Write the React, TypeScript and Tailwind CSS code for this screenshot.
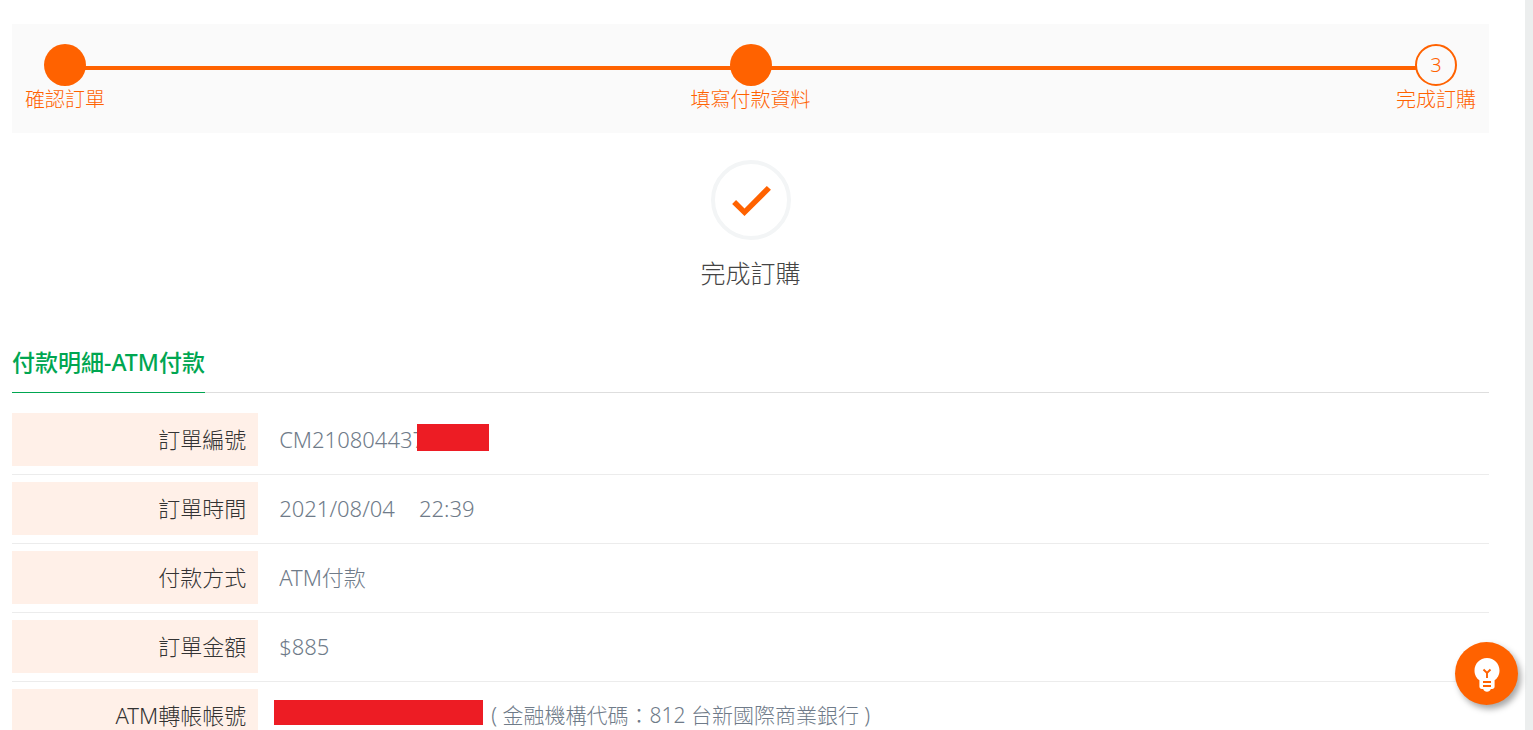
import type { ReactNode } from "react";

type Step = { label: string; number: number; done: boolean };
type Detail = { label: string; value: ReactNode };

const steps: Step[] = [
  { label: "確認訂單", number: 1, done: true },
  { label: "填寫付款資料", number: 2, done: true },
  { label: "完成訂購", number: 3, done: false },
];

const details: Detail[] = [
  {
    label: "訂單編號",
    value: (
      <span className="relative">
        CM210804437
        <span className="absolute top-0 left-[138px] h-[27px] w-[72px] bg-[#ed1c24]" />
      </span>
    ),
  },
  {
    label: "訂單時間",
    value: (
      <span className="flex gap-6">
        <span>2021/08/04</span>
        <span>22:39</span>
      </span>
    ),
  },
  { label: "付款方式", value: "ATM付款" },
  { label: "訂單金額", value: "$885" },
  {
    label: "ATM轉帳帳號",
    value: (
      <span className="-ml-[5px] flex items-center gap-2 text-[21px]">
        <span className="mb-1.5 h-[25px] w-[209px] bg-[#ed1c24]" />
        <span>( 金融機構代碼：812 台新國際商業銀行 )</span>
      </span>
    ),
  },
];

function Steps() {
  return (
    <div className="relative bg-[#fafafa] px-[13px] pt-5 pb-[19px]">
      <div className="absolute inset-x-16 top-[42px] h-1 bg-[#ff6200]" />
      <ol className="relative flex justify-between text-xl text-[#ff6200]">
        {steps.map((s) => (
          <li key={s.number} className="flex flex-col items-center">
            <span
              className={
                s.done
                  ? "h-[42px] w-[42px] rounded-full bg-[#ff6200]"
                  : "flex h-[42px] w-[42px] items-center justify-center rounded-full border-2 border-[#ff6200] bg-[#fafafa]"
              }
            >
              {!s.done && s.number}
            </span>
            <span className="leading-7">{s.label}</span>
          </li>
        ))}
      </ol>
    </div>
  );
}

function Done() {
  return (
    <div className="mt-[27px] flex flex-col items-center">
      <div className="flex h-20 w-20 items-center justify-center rounded-full border-4 border-[#f3f5f6]">
        <svg viewBox="0 0 24 24" className="h-[52px] w-[52px] shrink-0" fill="#ff6200">
          <path d="M9 15.9 5.100 12l-1.800 1.800L9 19.400 21.200 7.300l-1.900-1.800z" />
        </svg>
      </div>
      <h1 className="mt-[15px] text-[25px] leading-9 text-[#444]">完成訂購</h1>
    </div>
  );
}

function HelpButton() {
  return (
    <button
      aria-label="小幫手"
      className="fixed right-[15px] bottom-[25px] flex h-[63px] w-[63px] items-center justify-center rounded-full bg-[#ff6200] pt-0.5 shadow-[3px_4px_6px_rgba(0,0,0,0.35)]"
    >
      <svg viewBox="0 0 26 34" className="h-[34px] w-[26px]" fill="none">
        <path
          d="M13 0C5.800 0 .5 5.600.5 12.500c0 4.500 2.200 8 4.900 9.800v6.200c0 1.500 1 2.500 2.500 2.500h1.300c.6 1.800 2 2.700 3.800 2.700s3.200-.9 3.800-2.700h1.300c1.500 0 2.500-1 2.500-2.500v-6.200c2.700-1.800 4.900-5.300 4.900-9.800C25.500 5.600 20.200 0 13 0z"
          fill="#fff"
        />
        <path d="M9.500 11.500 13 15l3.500-3.500M13 15v5M9 24h8M9 28h8" stroke="#ff6200" strokeWidth="1.900" />
      </svg>
    </button>
  );
}

export default function App() {
  return (
    <div className="flex h-screen overflow-hidden bg-white font-['Noto_Sans','Noto_Sans_CJK_TC',sans-serif] font-light">
      <main className="min-w-0 flex-1 pt-6 pr-9 pl-3">
        <Steps />
        <Done />
        <div className="mt-[53px] flex border-b border-[#dedede]">
          <h2 className="-mb-px border-b border-[#00a651] pb-3 text-[23px] leading-9 font-medium text-[#00a651]">
            付款明細-ATM付款
          </h2>
        </div>
        <table className="mt-[13px] w-full table-fixed border-collapse">
          <tbody>
            {details.map((d) => (
              <tr key={d.label} className="border-b border-[#ececec]">
                <th scope="row" className="w-1/6 pt-[7px] pb-2 text-right text-[22px] font-light text-[#333]">
                  <div className="bg-[#fff0e8] pr-3 leading-[53px]">{d.label}</div>
                </th>
                <td className="pt-[7px] pb-2 pl-[21px] text-[22px] leading-[53px] text-[#6f7b89]">{d.value}</td>
              </tr>
            ))}
          </tbody>
        </table>
      </main>
      <div className="w-2 bg-[#eceeee]" />
      <HelpButton />
    </div>
  );
}
